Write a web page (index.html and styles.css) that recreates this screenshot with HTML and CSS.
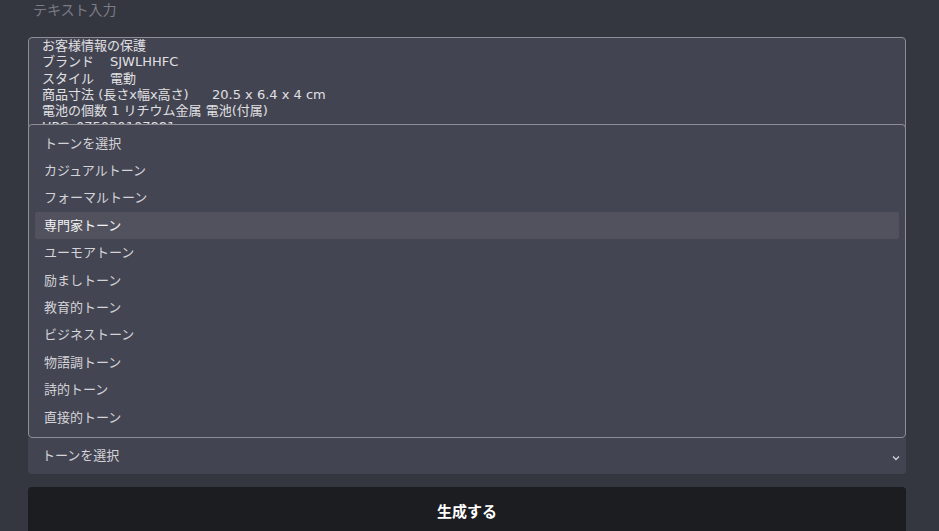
FILE: index.html
```html
<!DOCTYPE html>
<html lang="ja">
<head>
<meta charset="UTF-8">
<meta name="viewport" content="width=device-width, initial-scale=1.0">
<title>テキスト入力</title>
<link rel="stylesheet" href="styles.css">
</head>
<body>

<div class="container">
    <h3 class="section-title">テキスト入力</h3>

    <form id="formulario">
        <textarea class="text-input" id="texto" spellcheck="false">お客様情報の保護
ブランド	SJWLHHFC
スタイル	電動
商品寸法 (長さx幅x高さ)	20.5 x 6.4 x 4 cm
電池の個数 1 リチウム金属 電池(付属)
UPC	075030107881
メーカー	SJWLHHFC
製品型番	SJ-2024
商品の重量	180 g</textarea>

        <div class="tone-field">
            <!-- Lista aberta do seletor de tom -->
            <ul class="tone-menu">
                <li>トーンを選択</li>
                <li>カジュアルトーン</li>
                <li>フォーマルトーン</li>
                <li class="active">専門家トーン</li>
                <li>ユーモアトーン</li>
                <li>励ましトーン</li>
                <li>教育的トーン</li>
                <li>ビジネストーン</li>
                <li>物語調トーン</li>
                <li>詩的トーン</li>
                <li>直接的トーン</li>
            </ul>
            <div class="tone-select">
                <span class="tone-label">トーンを選択</span>
                <svg class="chevron" width="8" height="6" viewBox="0 0 8 6">
                    <path d="M1 1.5 L4 4.5 L7 1.5" fill="none" stroke="#cfd0d4" stroke-width="1.4"/>
                </svg>
            </div>
        </div>

        <button type="submit" class="btn-generate">生成する</button>
    </form>
</div>

</body>
</html>
```

FILE: styles.css
```css
body {
    font-family: "Noto Sans", "Noto Sans CJK JP", sans-serif;
    margin: 0;
    padding: 0;
    background-color: #353740;
    overflow: hidden;
}

.container {
    width: 878px;
    margin-left: 28px;
}

.section-title {
    margin: 0 0 17px 5px;
    font-size: 14px;
    font-weight: normal;
    line-height: 20px;
    color: #7b7c85;
}

form {
    display: flex;
    flex-direction: column;
}

.text-input {
    display: block;
    height: 389px;
    padding: 0 13px;
    margin: 0 0 12px 0;
    border: 1px solid #8d8e95;
    border-radius: 4px;
    background-color: #434451;
    color: #e0e0e3;
    font-family: "DejaVu Sans", "Noto Sans CJK JP", sans-serif;
    font-size: 13px;
    line-height: 16.3px;
    tab-size: 34px;
    resize: none;
    overflow: hidden;
    box-sizing: border-box;
    outline: none;
}

.tone-field {
    position: relative;
}

/* Lista aberta sobre o textarea */
.tone-menu {
    position: absolute;
    left: 0;
    right: 0;
    bottom: 100%;
    margin: 0;
    padding: 5px 6px 6px 6px;
    list-style: none;
    background-color: #444552;
    border: 1px solid #8d8e95;
    border-radius: 4px;
    box-sizing: border-box;
    z-index: 10;
}

.tone-menu li {
    height: 27.4px;
    line-height: 27.4px;
    padding-left: 9px;
    font-size: 13px;
    color: #d3d3d8;
    border-radius: 2px;
}

.tone-menu li.active {
    background-color: #52525e;
    color: #f2f2f4;
}

.tone-select {
    display: flex;
    align-items: center;
    justify-content: space-between;
    height: 36px;
    padding: 0 6px 0 14px;
    background-color: #434451;
    border-radius: 0 0 4px 4px;
    font-size: 13px;
    color: #d3d3d8;
    box-sizing: border-box;
}

.tone-label {
    margin-top: -3px;
}

.chevron {
    margin-top: 4px;
}

.btn-generate {
    margin-top: 13px;
    height: 50px;
    padding: 0 0 4px 0;
    border: none;
    border-radius: 4px;
    background-color: #1c1d20;
    color: #fff;
    font-family: "Noto Sans CJK JP", sans-serif;
    font-size: 15px;
    font-weight: bold;
    cursor: pointer;
}
```
